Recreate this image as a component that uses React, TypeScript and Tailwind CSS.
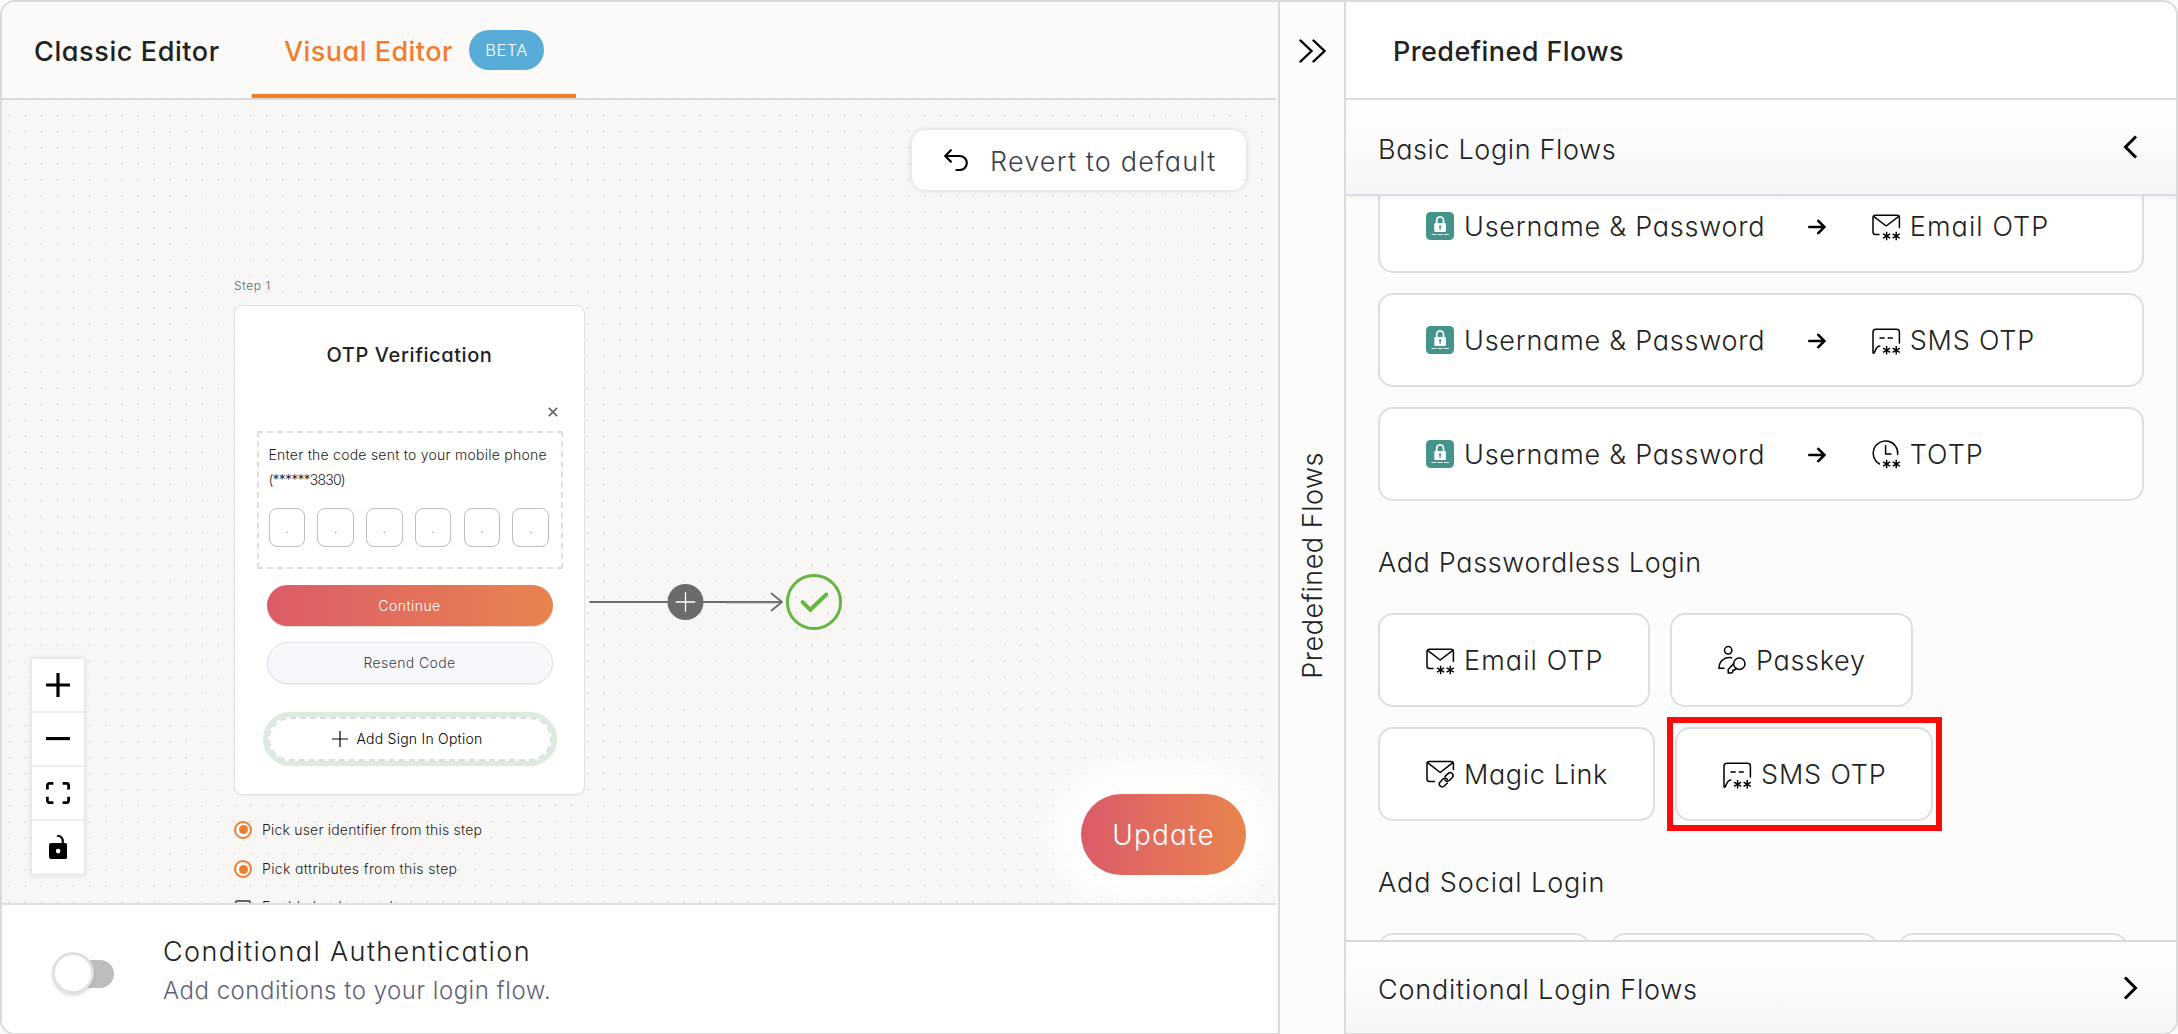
import type { ReactNode } from "react";

type IconName = "email" | "sms" | "totp" | "passkey" | "magic";

function Asterisk({ x, y }: { x: number; y: number }) {
  return (
    <path
      d={`M${x} ${y - 4.2}v8.4M${x - 3.6} ${y - 2.1}l7.2 4.2M${x + 3.6} ${y - 2.1}l-7.2 4.2`}
      strokeWidth="1.45"
      strokeLinecap="butt"
    />
  );
}

function FlowIcon({ name }: { name: IconName }) {
  return (
    <svg
      className="h-7 w-7 shrink-0 overflow-visible"
      viewBox="0 0 28 28"
      fill="none"
      stroke="#000"
      strokeWidth="1.5"
      strokeLinecap="round"
      strokeLinejoin="round"
    >
      {name === "email" && (
        <>
          <path d="M7 22.5H3.6C2 22.5 1 21.5 1 20V5.500C1 4 2 3.300 3.600 3.300H24.900C26.500 3.300 27.400 4 27.400 5.500V15.500" />
          <path d="M1.600 4.300L14.200 14L26.800 4.300" />
          <Asterisk x={14.6} y={24} />
          <Asterisk x={24.2} y={24} />
        </>
      )}
      {name === "sms" && (
        <>
          <path d="M7.800 19.900C4.600 19.900 4.400 22.500 2.200 26.800C1.700 27.500 1 27.300 1 26.500V6C1 4 2 3.200 4 3.200H24.400C26.400 3.200 27.400 4 27.400 6V17" />
          <path d="M7.500 12H12.700M15.700 12H20.900" strokeLinecap="butt" />
          <Asterisk x={14.6} y={24.3} />
          <Asterisk x={24.2} y={24.3} />
        </>
      )}
      {name === "totp" && (
        <>
          <path d="M7.500 24A12.300 12.300 0 1 1 25.700 14.500" />
          <path d="M13.600 5.500V14H19" />
          <Asterisk x={14.6} y={24} />
          <Asterisk x={24.2} y={24} />
        </>
      )}
      {name === "passkey" && (
        <>
          <circle cx="10.200" cy="4.300" r="3.700" />
          <path d="M13.600 11.800C6.500 10.500 1.200 15 .9 22.200H6" />
          <circle cx="21.300" cy="17.700" r="5.700" />
          <path d="M15.700 17.400L10.200 23.600V27H13.600L15 25.600V23.900H16.700L18.300 22.300" />
        </>
      )}
      {name === "magic" && (
        <>
          <path d="M8.500 21.600H3.600C2 21.600 1 20.600 1 19.100V4C1 2.500 2 1.500 3.600 1.500H24.900C26.500 1.500 27.400 2.500 27.400 4V9.500" />
          <path d="M1.600 2.600L14.200 12.500L26.800 2.600" />
          <path d="M18.900 16.600L22 13.600C25 11 28.800 14.500 26.300 17.500L23.600 20.300C22 21.700 20 21.500 18.900 20" />
          <path d="M21.300 23L18.300 26C15.300 28.500 11.600 25 14.100 22L16.800 19.200C18.400 17.900 20.400 18.100 21.500 19.600" />
        </>
      )}
    </svg>
  );
}

function LockBadge() {
  return (
    <svg className="h-7 w-7 shrink-0" viewBox="0 0 28 28">
      <rect width="28" height="28" rx="4.500" fill="#43948a" />
      <path d="M10.700 12V8.300a3.400 3.400 0 0 1 6.800 0V12" fill="none" stroke="#fff" strokeWidth="1.700" />
      <rect x="8.300" y="11" width="11.600" height="9" rx="1.200" fill="#fff" />
      <path d="M14.100 13.300a1.300 1.300 0 0 1 .6 2.400v2.300h-1.200v-2.300a1.300 1.300 0 0 1 .6-2.400z" fill="#43948a" />
      <path d="M5.500 22.500h5M11.700 22.500h5M17.900 22.500h5" stroke="#d9ebe8" strokeWidth="1.200" />
    </svg>
  );
}

function StepArrow() {
  return (
    <svg className="ml-[43px] mr-[46px] mt-[2px] h-4 w-[18px] shrink-0" viewBox="0 0 18 16" fill="none" stroke="#000" strokeWidth="2.600" strokeLinecap="round">
      <path d="M1.300 8H16M10.300 1.800L16.500 8L10.300 14.200" strokeLinejoin="miter" />
    </svg>
  );
}

function LoginRow({ icon, label, labelClass }: { icon: IconName; label: string; labelClass: string }) {
  return (
    <div className="flex h-[94px] w-[766px] shrink-0 items-center rounded-[15px] border-2 border-[#dedede] bg-white pl-[46px]">
      <LockBadge />
      <span className="ml-[10px] mt-[2px] whitespace-nowrap tracking-[0.76px]">Username &amp; Password</span>
      <StepArrow />
      <FlowIcon name={icon} />
      <span className={`ml-[9.5px] mt-[2px] whitespace-nowrap ${labelClass}`}>{label}</span>
    </div>
  );
}

function FlowButton({ icon, label, className }: { icon: IconName; label: string; className: string }) {
  return (
    <button className={`flex h-[94px] items-center gap-[10px] whitespace-nowrap rounded-[15px] border-2 border-[#dedede] bg-white pl-[46px] ${className}`}>
      <FlowIcon name={icon} />
      <span className="mt-[2px]">{label}</span>
    </button>
  );
}

function ControlButton({ children }: { children: ReactNode }) {
  return (
    <button className="flex h-[54px] w-[52px] items-center justify-center border-b-2 border-[#eeeeee] bg-white">
      {children}
    </button>
  );
}

function Controls() {
  return (
    <div className="absolute left-[30px] top-[559px] flex flex-col shadow-[0_0_4px_2px_rgba(0,0,0,0.08)]">
      <ControlButton>
        <svg className="w-6" viewBox="0 0 32 32"><path d="M32 18.133H18.133V32h-4.266V18.133H0v-4.266h13.867V0h4.266v13.867H32z" /></svg>
      </ControlButton>
      <ControlButton>
        <svg className="w-6" viewBox="0 0 32 5"><path d="M0 0h32v4.200H0z" /></svg>
      </ControlButton>
      <ControlButton>
        <svg className="w-6" viewBox="0 0 32 30"><path d="M3.692 4.630c0-.53.4-.938.939-.938h5.215V0H4.708C2.130 0 0 2.054 0 4.630v5.216h3.692V4.631zM27.354 0h-5.200v3.692h5.170c.53 0 .984.4.984.939v5.215H32V4.631A4.624 4.624 0 0027.354 0zm.954 24.830c0 .532-.4.940-.939.940h-5.215v3.768h5.215c2.577 0 4.631-2.130 4.631-4.707v-5.139h-3.692v5.139zm-23.677.940a.919.919 0 01-.939-.940v-5.138H0v5.139c0 2.577 2.130 4.707 4.708 4.707h5.138V25.770H4.631z" /></svg>
      </ControlButton>
      <ControlButton>
        <svg className="h-6" viewBox="0 0 25 32"><path d="M21.333 10.667H19.810V7.619C19.810 3.429 16.380 0 12.190 0c-4.114 1.828-1.370 2.133.305 2.438 1.676.305 4.420 2.590 4.420 5.181v3.048H3.047A3.056 3.056 0 000 13.714v15.238A3.056 3.056 0 003.048 32h18.285a3.056 3.056 0 003.048-3.048V13.714a3.056 3.056 0 00-3.048-3.047zM12.190 24.533a3.056 3.056 0 01-3.047-3.047 3.056 3.056 0 013.047-3.048 3.056 3.056 0 013.048 3.048 3.056 3.056 0 01-3.048 3.047z" /></svg>
      </ControlButton>
    </div>
  );
}

function Radio() {
  return (
    <span className="flex h-[18px] w-[18px] items-center justify-center rounded-full border-2 border-[#f07c2f] bg-white">
      <span className="h-[9px] w-[9px] rounded-full bg-[#f07c2f]" />
    </span>
  );
}

function StepNode() {
  return (
    <div className="absolute left-[232px] top-[176px] w-[351px] text-[14px] font-[350] text-[#1d1d22]">
      <div className="h-[29px] text-[12px] leading-[20px] tracking-[0.6px] text-[#5f5f78]">Step 1</div>
      <div className="flex h-[490px] flex-col items-center rounded-lg border border-[#e0e0e0] bg-white pt-[34.500px] shadow-[0_1px_1px_rgba(0,0,0,0.04)]">
        <h2 className="text-[20px] font-medium leading-7 tracking-[0.6px] text-[#1f1f1f]">OTP Verification</h2>
        <svg className="mr-[26.500px] mt-[38px] h-[10px] w-[10px] shrink-0 self-end" viewBox="0 0 10 10" stroke="#666" strokeWidth="1.700">
          <path d="M.8.8L9.200 9.200M9.200.8L.8 9.200" />
        </svg>
        <div className="mt-[14.500px] h-[138px] w-[306px] shrink-0 border-2 border-dashed border-[#dddddd] pl-[10px] pt-[9px] leading-[25px]">
          <p className="whitespace-nowrap tracking-[0.24px]">Enter the code sent to your mobile phone</p>
          <p className="whitespace-nowrap tracking-[-0.8px]">(******3830)</p>
          <div className="mt-[15.500px] flex gap-[12.3px]">
            {[0, 1, 2, 3, 4, 5].map((i) => (
              <span key={i} className="flex h-[39px] w-[36.5px] items-center justify-center rounded-[8px] border border-[#bdbdbd] pt-[2px] text-[13px] text-[#777]">.</span>
            ))}
          </div>
        </div>
        <button className="mt-[16px] h-[41px] w-[286px] shrink-0 rounded-full bg-linear-to-r from-[#da5b67] to-[#ea834d] tracking-[0.44px] text-white shadow-[0_1px_1px_rgba(0,0,0,0.15)]">Continue</button>
        <button className="mt-[16px] h-[42px] w-[286px] shrink-0 rounded-full border border-[#dfdfe7] bg-[#f7f8fc] tracking-[0.4px] text-[#3f3f4b] shadow-[0_1px_1px_rgba(0,0,0,0.06)]">Resend Code</button>
        <button className="mt-[28px] h-[54px] w-[294px] shrink-0 rounded-full border-[5px] border-[#dcecdc]">
          <span className="flex h-full items-center justify-center gap-[8px] rounded-full border-2 border-dashed border-[#dddddd] pr-[4px] tracking-[0.24px] text-black">
            <svg className="h-4 w-4" viewBox="0 0 16 16" stroke="#000" strokeWidth="1.200"><path d="M8 0V16M0 8H16" /></svg>
            Add Sign In Option
          </span>
        </button>
      </div>
      <div className="mt-[15px]">
        <div className="flex h-[39.5px] items-center gap-[10px] tracking-[0.2px]"><Radio />Pick user identifier from this step</div>
        <div className="flex h-[39.5px] items-center gap-[10px] tracking-[0.35px]"><Radio />Pick attributes from this step</div>
        <div className="-mt-px flex h-[39.5px] items-center gap-[11px] tracking-[0.3px]">
          <span className="ml-px h-4 w-4 rounded-[2px] border-2 border-[#666]" />
          <span className="-mt-[2px]">Enable backup codes</span>
        </div>
      </div>
    </div>
  );
}

function Edge() {
  return (
    <svg className="absolute left-[586px] top-[470px]" width="256" height="64" viewBox="0 0 256 64" fill="none">
      <path d="M1.500 32H194" stroke="#6b6b6b" strokeWidth="2" />
      <path d="M137 33.300H190" stroke="#c9c9c4" strokeWidth="1" />
      <path d="M183.500 23.500L194 32L183.500 40.500" stroke="#6b6b6b" strokeWidth="1.800" strokeLinecap="round" strokeLinejoin="round" />
      <circle cx="97.500" cy="32" r="18" fill="#6b6b6b" />
      <path d="M97.500 22.200V41.800M87.700 32H107.300" stroke="#fff" strokeWidth="1.300" />
      <circle cx="226" cy="32" r="26.600" stroke="#64b63e" strokeWidth="3" />
      <path d="M214.600 32.200L222.300 39.800L238.300 24.500" stroke="#64b63e" strokeWidth="4" strokeLinecap="round" strokeLinejoin="miter" />
    </svg>
  );
}

function Canvas() {
  return (
    <div className="relative h-[805px] w-[1274px] overflow-hidden bg-[#f8f7f5]">
      <svg className="absolute inset-0 h-full w-full">
        <defs>
          <pattern id="dots" x="-0.6" y="-8.600" width="16.060" height="16.050" patternUnits="userSpaceOnUse">
            <circle cx="8.030" cy="8.020" r="0.900" fill="#d9d7d4" />
          </pattern>
        </defs>
        <rect width="100%" height="100%" fill="url(#dots)" />
      </svg>
      <StepNode />
      <Edge />
      <Controls />
      <button className="absolute left-[910px] top-[30px] flex h-[60px] w-[334px] items-center rounded-[14px] bg-white pl-[32px] text-[#3f3f4b] shadow-[0_0_5px_1px_rgba(0,0,0,0.1)]">
        <svg className="-mt-px h-[22px] w-[24px]" viewBox="0 0 24 22" fill="none" stroke="#000" strokeWidth="2.200" strokeLinecap="round">
          <path d="M6.800 1.200L1.200 7L6.800 12.600M1.500 7H15.800A7 7 0 0 1 15.800 21H12.500" />
        </svg>
        <span className="ml-[22px] mt-[3px] whitespace-nowrap tracking-[1.15px]">Revert to default</span>
      </button>
      <button className="absolute left-[1079px] top-[694px] h-[81px] w-[165px] rounded-full bg-linear-to-r from-[#da5b67] to-[#ea834d] text-[28px] tracking-[1.2px] text-white shadow-[0_0_40px_28px_#fff]">Update</button>
    </div>
  );
}

export default function App() {
  return (
    <div className="h-[1034px] w-[2178px] overflow-hidden bg-[#fafafa] font-['Inter',sans-serif] text-[27px] font-light leading-[34px] text-[#222222] [font-feature-settings:'cv11']">
      <div className="flex h-[1035px]">
        <section className="flex w-[1280px] flex-col overflow-hidden rounded-l-[15px] border-2 border-[#dbdad9] bg-[#faf9f8]">
          <header className="flex h-[98px] w-[1274px] shrink-0 border-b-2 border-[#dbdad9] bg-[#fbfaf9] font-medium">
            <div className="flex w-[250px] items-center pl-[32px] pt-[4px] tracking-[0.6px]">Classic Editor</div>
            <div className="flex w-[324px] items-center border-b-4 border-[#f07c2f] pl-[32px] pt-[4px]">
              <span className="mt-[4px] w-[185px] whitespace-nowrap tracking-[0.46px] text-[#f07c2f]">Visual Editor</span>
              <span className="flex h-10 w-[75px] items-center justify-center rounded-full bg-[#58acd8] text-[16.5px] font-light tracking-[0.4px] text-white">BETA</span>
            </div>
          </header>
          <Canvas />
          <footer className="flex h-[130px] w-[1274px] shrink-0 border-t-2 border-[#e0e0e0] bg-white">
            <div className="relative ml-[50px] mt-[47px] h-[42px] w-[62px]">
              <span className="absolute left-[20px] top-[8px] h-7 w-[42px] rounded-full bg-[#bdbdbd]" />
              <span className="absolute left-0 top-0 h-[42px] w-[42px] rounded-full border-[3px] border-[#e0e0e0] bg-white shadow-[0_2px_3px_rgba(0,0,0,0.12)]" />
            </div>
            <div className="ml-[49px] mt-[29px]">
              <div className="h-[38px] leading-[36px] tracking-[1.38px]">Conditional Authentication</div>
              <div className="text-[24px] leading-[37px] tracking-[0.5px] text-[#5f5f78]">Add conditions to your login flow.</div>
            </div>
          </footer>
        </section>

        <aside className="flex w-[64px] flex-col items-center border-t-2 border-[#d9d9d9] bg-[#fcfcfc]">
          <svg className="mt-[37px] h-6 w-[27px]" viewBox="0 0 27 24" fill="none" stroke="#000" strokeWidth="2.400" strokeLinecap="round">
            <path d="M1.500 1.500L12.500 12L1.500 22.500M14.500 1.500L25.500 12L14.500 22.500" />
          </svg>
          <span className="ml-[2px] mt-[389px] rotate-180 whitespace-nowrap tracking-[0.52px] [writing-mode:vertical-rl]">Predefined Flows</span>
        </aside>

        <section className="flex w-[834px] flex-col overflow-hidden rounded-r-[15px] border-2 border-[#dadada] bg-[#fcfcfc]">
          <header className="h-[98px] shrink-0 border-b-2 border-[#dcdcdc] bg-white pl-[47px] pt-[33px] font-medium tracking-[0.42px]">Predefined Flows</header>
          <div className="relative flex h-[96px] shrink-0 items-center justify-between border-b-2 border-[#dcdce4] bg-linear-to-b from-white to-[#f6f6f9] pl-[32px] pr-[38.5px] shadow-[0_2px_4px_rgba(0,0,0,0.06)]">
            <span className="mt-[5px] tracking-[0.62px]">Basic Login Flows</span>
            <svg className="h-6 w-[15px]" viewBox="0 0 15 24" fill="none" stroke="#000" strokeWidth="3"><path d="M13 1.500L2.500 12L13 22.500" /></svg>
          </div>
          <div className="flex h-[744px] shrink-0 flex-col overflow-hidden pl-[32px]">
            <div className="-mt-[17px] flex shrink-0 flex-col gap-5">
              <LoginRow icon="email" label="Email OTP" labelClass="tracking-[1.1px]" />
              <LoginRow icon="sms" label="SMS OTP" labelClass="tracking-[0.8px]" />
              <LoginRow icon="totp" label="TOTP" labelClass="tracking-[1px]" />
            </div>
            <h3 className="mt-[45px] h-[67px] shrink-0 tracking-[0.66px]">Add Passwordless Login</h3>
            <div className="flex shrink-0 flex-col gap-5">
              <div className="flex gap-5">
                <FlowButton icon="email" label="Email OTP" className="w-[272px] tracking-[1.1px]" />
                <FlowButton icon="passkey" label="Passkey" className="w-[243px] tracking-[0.7px]" />
              </div>
              <div className="flex gap-5">
                <FlowButton icon="magic" label="Magic Link" className="w-[277px] tracking-[0.64px]" />
                <div className="relative">
                  <FlowButton icon="sms" label="SMS OTP" className="w-[258px] tracking-[0.84px]" />
                  <div className="absolute -bottom-[10px] -left-[8px] -right-[9px] -top-[10px] border-[6px] border-[#fb0a0a]" />
                </div>
              </div>
            </div>
            <h3 className="mt-[45px] h-[67px] shrink-0 tracking-[0.93px]">Add Social Login</h3>
            <div className="flex shrink-0 gap-5">
              <div className="h-[94px] w-[212px] rounded-[15px] border-2 border-[#dedede] bg-white" />
              <div className="h-[94px] w-[268px] rounded-[15px] border-2 border-[#dedede] bg-white" />
              <div className="h-[94px] w-[230px] rounded-[15px] border-2 border-[#dedede] bg-white" />
            </div>
          </div>
          <div className="flex h-[94px] shrink-0 items-center justify-between border-t-2 border-[#d9d9d9] bg-linear-to-b from-white to-[#f6f6f9] pl-[32px] pr-[38.5px]">
            <span className="mt-[3px] tracking-[0.8px]">Conditional Login Flows</span>
            <svg className="h-6 w-[15px]" viewBox="0 0 15 24" fill="none" stroke="#000" strokeWidth="3"><path d="M2 1.500L12.500 12L2 22.500" /></svg>
          </div>
        </section>
      </div>
    </div>
  );
}
